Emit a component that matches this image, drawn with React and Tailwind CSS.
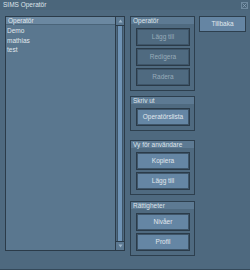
import React from "react";

const font = { fontFamily: '"Liberation Sans", Arial, sans-serif' };

function Btn({ children, enabled }) {
  return (
    <div
      className={
        "h-[18px] w-[54px] flex items-center justify-center border border-[#2b3b49] text-[6.5px] leading-none " +
        (enabled
          ? "bg-[#6586a4] text-[#e0e7ed] shadow-[inset_0_0_0_1px_#3e5569]"
          : "bg-[#4f6a80] text-[#98aab9] shadow-[inset_0_0_0_1px_#3e5569]")
      }
    >
      {children}
    </div>
  );
}

function Group({ title, children, className = "" }) {
  return (
    <div className={"w-[65px] border border-[#2d3f4e] bg-[#4f6a80] " + className}>
      <div className="h-[7px] bg-[#5d7a93] text-[6.5px] leading-[7px] text-[#dde4ea] pl-[2px]">
        {title}
      </div>
      <div className="flex flex-col gap-[2px] pl-[5px] pt-[4px] pb-[4px]">{children}</div>
    </div>
  );
}

export default function App() {
  return (
    <div
      className="w-[250px] h-[270px] bg-[#4e697f] flex flex-col border-b border-[#34495a] overflow-hidden"
      style={font}
    >
      <div className="h-[10px] bg-[#4b667b] flex items-center justify-between pl-[3px] pr-[2px]">
        <span className="text-[6.5px] leading-none text-[#dde4ea]">SIMS Operatör</span>
        <div className="w-[7px] h-[7px] border border-[#6f8aa0] flex items-center justify-center">
          <svg width="5" height="5" viewBox="0 0 5 5">
            <path d="M0.5 0.5L4.5 4.5M4.5 0.5L0.5 4.5" stroke="#8aa2b6" strokeWidth="0.8" />
          </svg>
        </div>
      </div>
      <div className="flex pt-[6px] pl-[5px]">
        <div className="w-[120px] h-[235px] border border-[#2b3b49] bg-[#5a778f] flex">
          <div className="flex-1 flex flex-col">
            <div className="h-[8px] bg-[#6b88a1] border-b border-[#4a6479] text-[6.5px] leading-[8px] text-[#e0e7ed] pl-[2px]">
              Operatör
            </div>
            <div className="text-[6.5px] text-[#e0e7ed] pl-[1px] leading-[9.5px] pt-[1px]">
              <div>Demo</div>
              <div>mathias</div>
              <div>test</div>
            </div>
          </div>
          <div className="w-[9px] border-l border-[#2b3b49] flex flex-col bg-[#4e697f]">
            <div className="h-[9px] bg-[#5b7891] border-b border-[#2b3b49] flex items-center justify-center">
              <svg width="5" height="4" viewBox="0 0 5 4">
                <path d="M2.5 0.5L4.5 3.5H0.5Z" fill="#9fb6c9" />
              </svg>
            </div>
            <div className="flex-1 bg-[#6f93b5] mx-[1px] border-x border-[#3d5468]" />
            <div className="h-[9px] bg-[#5b7891] border-t border-[#2b3b49] flex items-center justify-center">
              <svg width="5" height="4" viewBox="0 0 5 4">
                <path d="M0.5 0.5H4.5L2.5 3.5Z" fill="#9fb6c9" />
              </svg>
            </div>
          </div>
        </div>
        <div className="flex flex-col ml-[5px]">
          <Group title="Operatör">
            <Btn>Lägg till</Btn>
            <Btn>Redigera</Btn>
            <Btn>Radera</Btn>
          </Group>
          <Group title="Skriv ut" className="mt-[5px]">
            <Btn enabled>Operatörslista</Btn>
          </Group>
          <Group title="Vy för användare" className="mt-[9px]">
            <Btn enabled>Kopiera</Btn>
            <Btn enabled>Lägg till</Btn>
          </Group>
          <Group title="Rättigheter" className="mt-[6px]">
            <Btn enabled>Nivåer</Btn>
            <Btn enabled>Profil</Btn>
          </Group>
        </div>
        <div className="ml-[4px]">
          <div className="w-[47px] h-[16px] bg-[#6585a3] border border-[#2d3f4e] flex items-center justify-center text-[6.5px] text-[#e0e7ed]">
            Tillbaka
          </div>
        </div>
      </div>
    </div>
  );
}
